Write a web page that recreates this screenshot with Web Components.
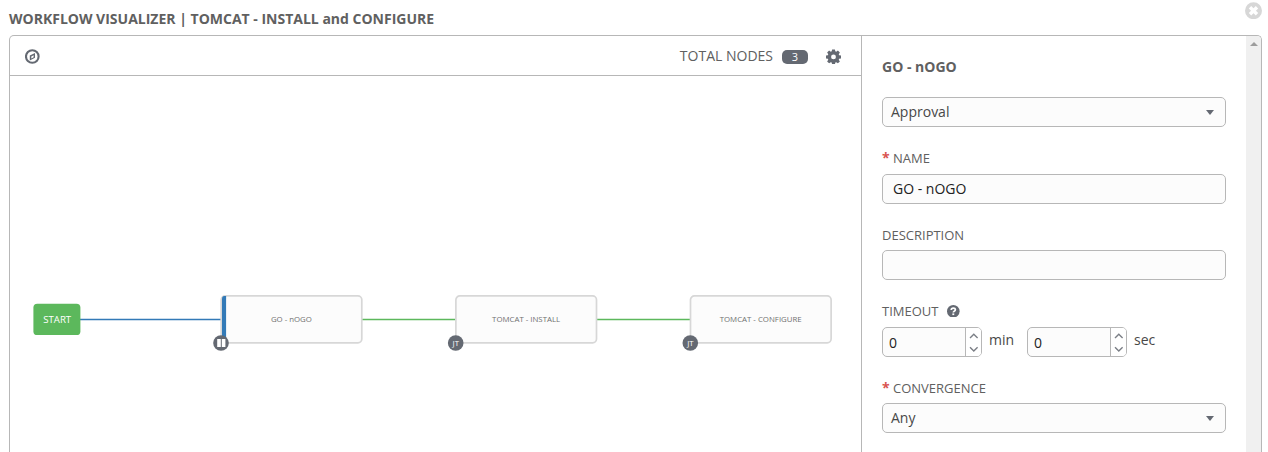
<!DOCTYPE html>
<html lang="en"><head><meta charset="utf-8"><title>Workflow Visualizer</title>
<style>html,body{margin:0;height:452px;overflow:hidden;background:#fff;font-family:"Open Sans","Noto Sans",sans-serif;font-size:14px;color:#606060}</style></head>
<body>
<workflow-visualizer heading="WORKFLOW VISUALIZER | TOMCAT - INSTALL and CONFIGURE">
  <graph-toolbar slot="toolbar" count="3"></graph-toolbar>
  <workflow-graph slot="graph"></workflow-graph>
  <node-form slot="form"></node-form>
</workflow-visualizer>
<script>
const define = (name, html) => customElements.define(name, class extends HTMLElement {
  connectedCallback() {
    if (this.shadowRoot) return;
    const t = document.createElement('template');
    t.innerHTML = html(n => this.getAttribute(n) || '', this);
    this.attachShadow({mode: 'open'}).append(t.content.cloneNode(true));
  }
});

define('workflow-visualizer', a => `
<style>
:host{display:flex;flex-direction:column;height:452px;box-sizing:border-box;padding:0 6px 0 9px}
header{height:35px;flex:none;display:flex;justify-content:space-between}
h1{margin:9px 0 0;font-size:14px;line-height:20px;font-weight:700;white-space:nowrap;color:#606060}
svg{margin:2px 0 0;width:17px;height:17px;flex:none}
main{flex:none;height:417px;box-sizing:border-box;border:1px solid #b7b7b7;border-bottom:0;border-radius:5px 5px 0 0;display:flex;overflow:hidden}
section{width:851px;border-right:1px solid #b7b7b7;display:flex;flex-direction:column}
aside{flex:1;display:flex;justify-content:space-between}
.track{width:15px;background:#f0f0f0;display:flex;justify-content:center}
.track i{width:0;height:0;margin-top:6px;border:4px solid transparent;border-top:0;border-bottom-color:#9d9d9d}
</style>
<header><h1>${a('heading')}</h1>
<svg viewBox="0 0 17 17"><circle cx="8.5" cy="8.7" r="8.5" fill="#d7d7d7"/><path d="M5 5.2l7 7M12 5.2l-7 7" stroke="#fff" stroke-width="3.4"/></svg></header>
<main><section><slot name="toolbar"></slot><slot name="graph"></slot></section>
<aside><slot name="form"></slot><div class="track"><i></i></div></aside></main>`);

define('graph-toolbar', a => `
<style>
:host{display:flex;align-items:center;height:39px;flex:none;border-bottom:1px solid #b7b7b7;padding:0 20px 0 15px}
svg{display:block}
.label{margin-left:auto;line-height:20px}
.badge{margin:2px 18px 0 9px;width:26px;height:14px;border-radius:5px;background:#646972;color:#fff;font-size:11px;line-height:14px;text-align:center}
.gear,.compass{margin-top:2px}
</style>
<svg class="compass" width="15" height="15" viewBox="0 0 15 15"><circle cx="7.3" cy="7.5" r="6.3" fill="none" stroke="#646972" stroke-width="2.1"/><path fill="#646972" fill-rule="evenodd" d="M10 3.9v4.9L4.8 11.5V6.6zM8.6 6.3L6.3 7.5v2l2.3-1.2z"/></svg>
<span class="label">TOTAL NODES</span><span class="badge">${a('count')}</span>
<svg class="gear" width="15" height="15" viewBox="0 0 16 16"><path fill="#646972" fill-rule="evenodd" d="M6.5.4h3l.4 2.1 1 .4 1.8-1.2 2.1 2.1-1.2 1.8.4 1 2 .4v3l-2 .4-.4 1 1.2 1.8-2.1 2.1-1.8-1.2-1 .4-.4 2.1h-3l-.4-2.1-1-.4-1.8 1.2-2.1-2.1 1.2-1.8-.4-1L0 10V7l2-.4.4-1-1.2-1.8 2.1-2.1 1.8 1.2 1-.4zM8 5.8a2.6 2.6 0 1 0 0 5.2 2.6 2.6 0 0 0 0-5.2z"/></svg>`);

const node = (x, label, width, badge, bar = '') => `
<g transform="translate(${x} 295.9)"><rect width="140.6" height="47" rx="3.9" fill="#fcfcfc" stroke="#d7d7d7" stroke-width="1.7"/>${bar}
<text x="70.2" y="26" font-size="7.8" textLength="${width}" lengthAdjust="spacingAndGlyphs" text-anchor="middle" fill="#707070">${label}</text>
<circle cx="-.2" cy="47.1" r="7.8" fill="#646972"/>${badge}</g>`;
const jt = '<text x="-.1" y="50" font-size="7.8" text-anchor="middle" fill="#fff">JT</text>';
define('workflow-graph', () => `
<style>:host{display:block;height:376px}svg{display:block}</style>
<svg width="851" height="376" viewBox="10 76 851 376">
<g stroke-width="1.6"><path stroke="#337ab7" d="M80 319.5h141"/><path stroke="#5cb85c" d="M362 319.5h93M597 319.5h93"/></g>
<rect x="33.4" y="303.7" width="47" height="31.4" rx="3.9" fill="#5cb85c"/>
<text x="57.2" y="322.8" font-size="9.4" textLength="28" lengthAdjust="spacingAndGlyphs" text-anchor="middle" fill="#fff">START</text>
${node(221.2, 'GO - nOGO', 41, '<path fill="#fff" d="M-4 43h3.6v8.2H-4zM.6 43h3.6v8.2H.6z"/>', '<path fill="#337ab7" d="M4.9 0v46.8H2.8Q.8 46.8.8 44V3Q.8 0 3 0z"/>')}
${node(455.9, 'TOMCAT - INSTALL', 68, jt)}
${node(690.5, 'TOMCAT - CONFIGURE', 82, jt)}
</svg>`);

define('form-field', a => `
<style>
:host{display:block;height:76.5px}
:host(:last-of-type){height:auto}
.label{display:flex;align-items:center;height:20px;margin-bottom:5.7px;font-size:13px;line-height:20px}
b{color:#d9534f;font-size:14px;line-height:20px;width:11px;font-weight:700}
svg{margin-left:8.5px}
</style>
<div class="label">${a('required') ? '<b>*</b>' : ''}<span>${a('label')}</span>${a('help') ? '<svg width="12.6" height="12.6" viewBox="0 0 12 12"><circle cx="6" cy="6" r="6" fill="#646972"/><path d="M4 4.7Q4.1 3 6 3T8 4.6Q8 5.4 6.9 6 6 6.5 6 7.2" fill="none" stroke="#fff" stroke-width="1.6"/><path fill="#fff" d="M5.1 8h1.8v1.6H5.1z"/></svg>' : ''}</div>
<slot></slot>`);

define('text-box', a => `
<style>
:host{display:flex;align-items:center;justify-content:space-between;box-sizing:border-box;height:30px;border:1px solid #b7b7b7;border-radius:5px;background:#fcfcfc;padding:0 11px 0 ${a('select') ? 8 : 10}px;color:${a('select') ? '#484848' : '#222'};line-height:20px}
i{border:4.5px solid transparent;border-bottom:0;border-top:5px solid #646972}
</style><span><slot></slot></span>${a('select') ? '<i></i>' : ''}`);

define('number-spinner', a => `
<style>
:host{display:flex;height:30px;color:#484848}
.box{display:flex;box-sizing:border-box;width:100px;border:1px solid #b7b7b7;border-radius:5px;background:#fcfcfc;overflow:hidden}
.value{flex:1;padding:5px 0 0 6px;line-height:20px;color:#222}
.arrows{width:15px;border-left:1px solid #b7b7b7;background:#fff}
.unit{margin-left:7px;line-height:25px}
svg{display:block}
</style><div class="box"><span class="value">${a('value')}</span><span class="arrows"><svg width="15" height="28" viewBox="0 0 15 28" fill="none" stroke="#7b7f86" stroke-width="1.4"><path d="M4 10l3.8-3.7L11.6 10M4 19.2l3.8 3.7 3.8-3.7"/></svg></span></div><span class="unit">${a('unit')}</span>`);

define('node-form', () => `
<style>
:host{display:block;width:344px;padding:21px 0 0 20px}
h2{margin:0 0 20px;font-size:14px;line-height:20px;font-weight:700}
.type{margin-bottom:21px}
.row{display:flex}
number-spinner:first-child{width:145px}
</style>
<h2>GO - nOGO</h2>
<text-box class="type" select="1">Approval</text-box>
<form-field label="NAME" required="1"><text-box>GO - nOGO</text-box></form-field>
<form-field label="DESCRIPTION"><text-box></text-box></form-field>
<form-field label="TIMEOUT" help="1"><div class="row"><number-spinner value="0" unit="min"></number-spinner><number-spinner value="0" unit="sec"></number-spinner></div></form-field>
<form-field label="CONVERGENCE" required="1"><text-box select="1">Any</text-box></form-field>`);
</script>
</body></html>
